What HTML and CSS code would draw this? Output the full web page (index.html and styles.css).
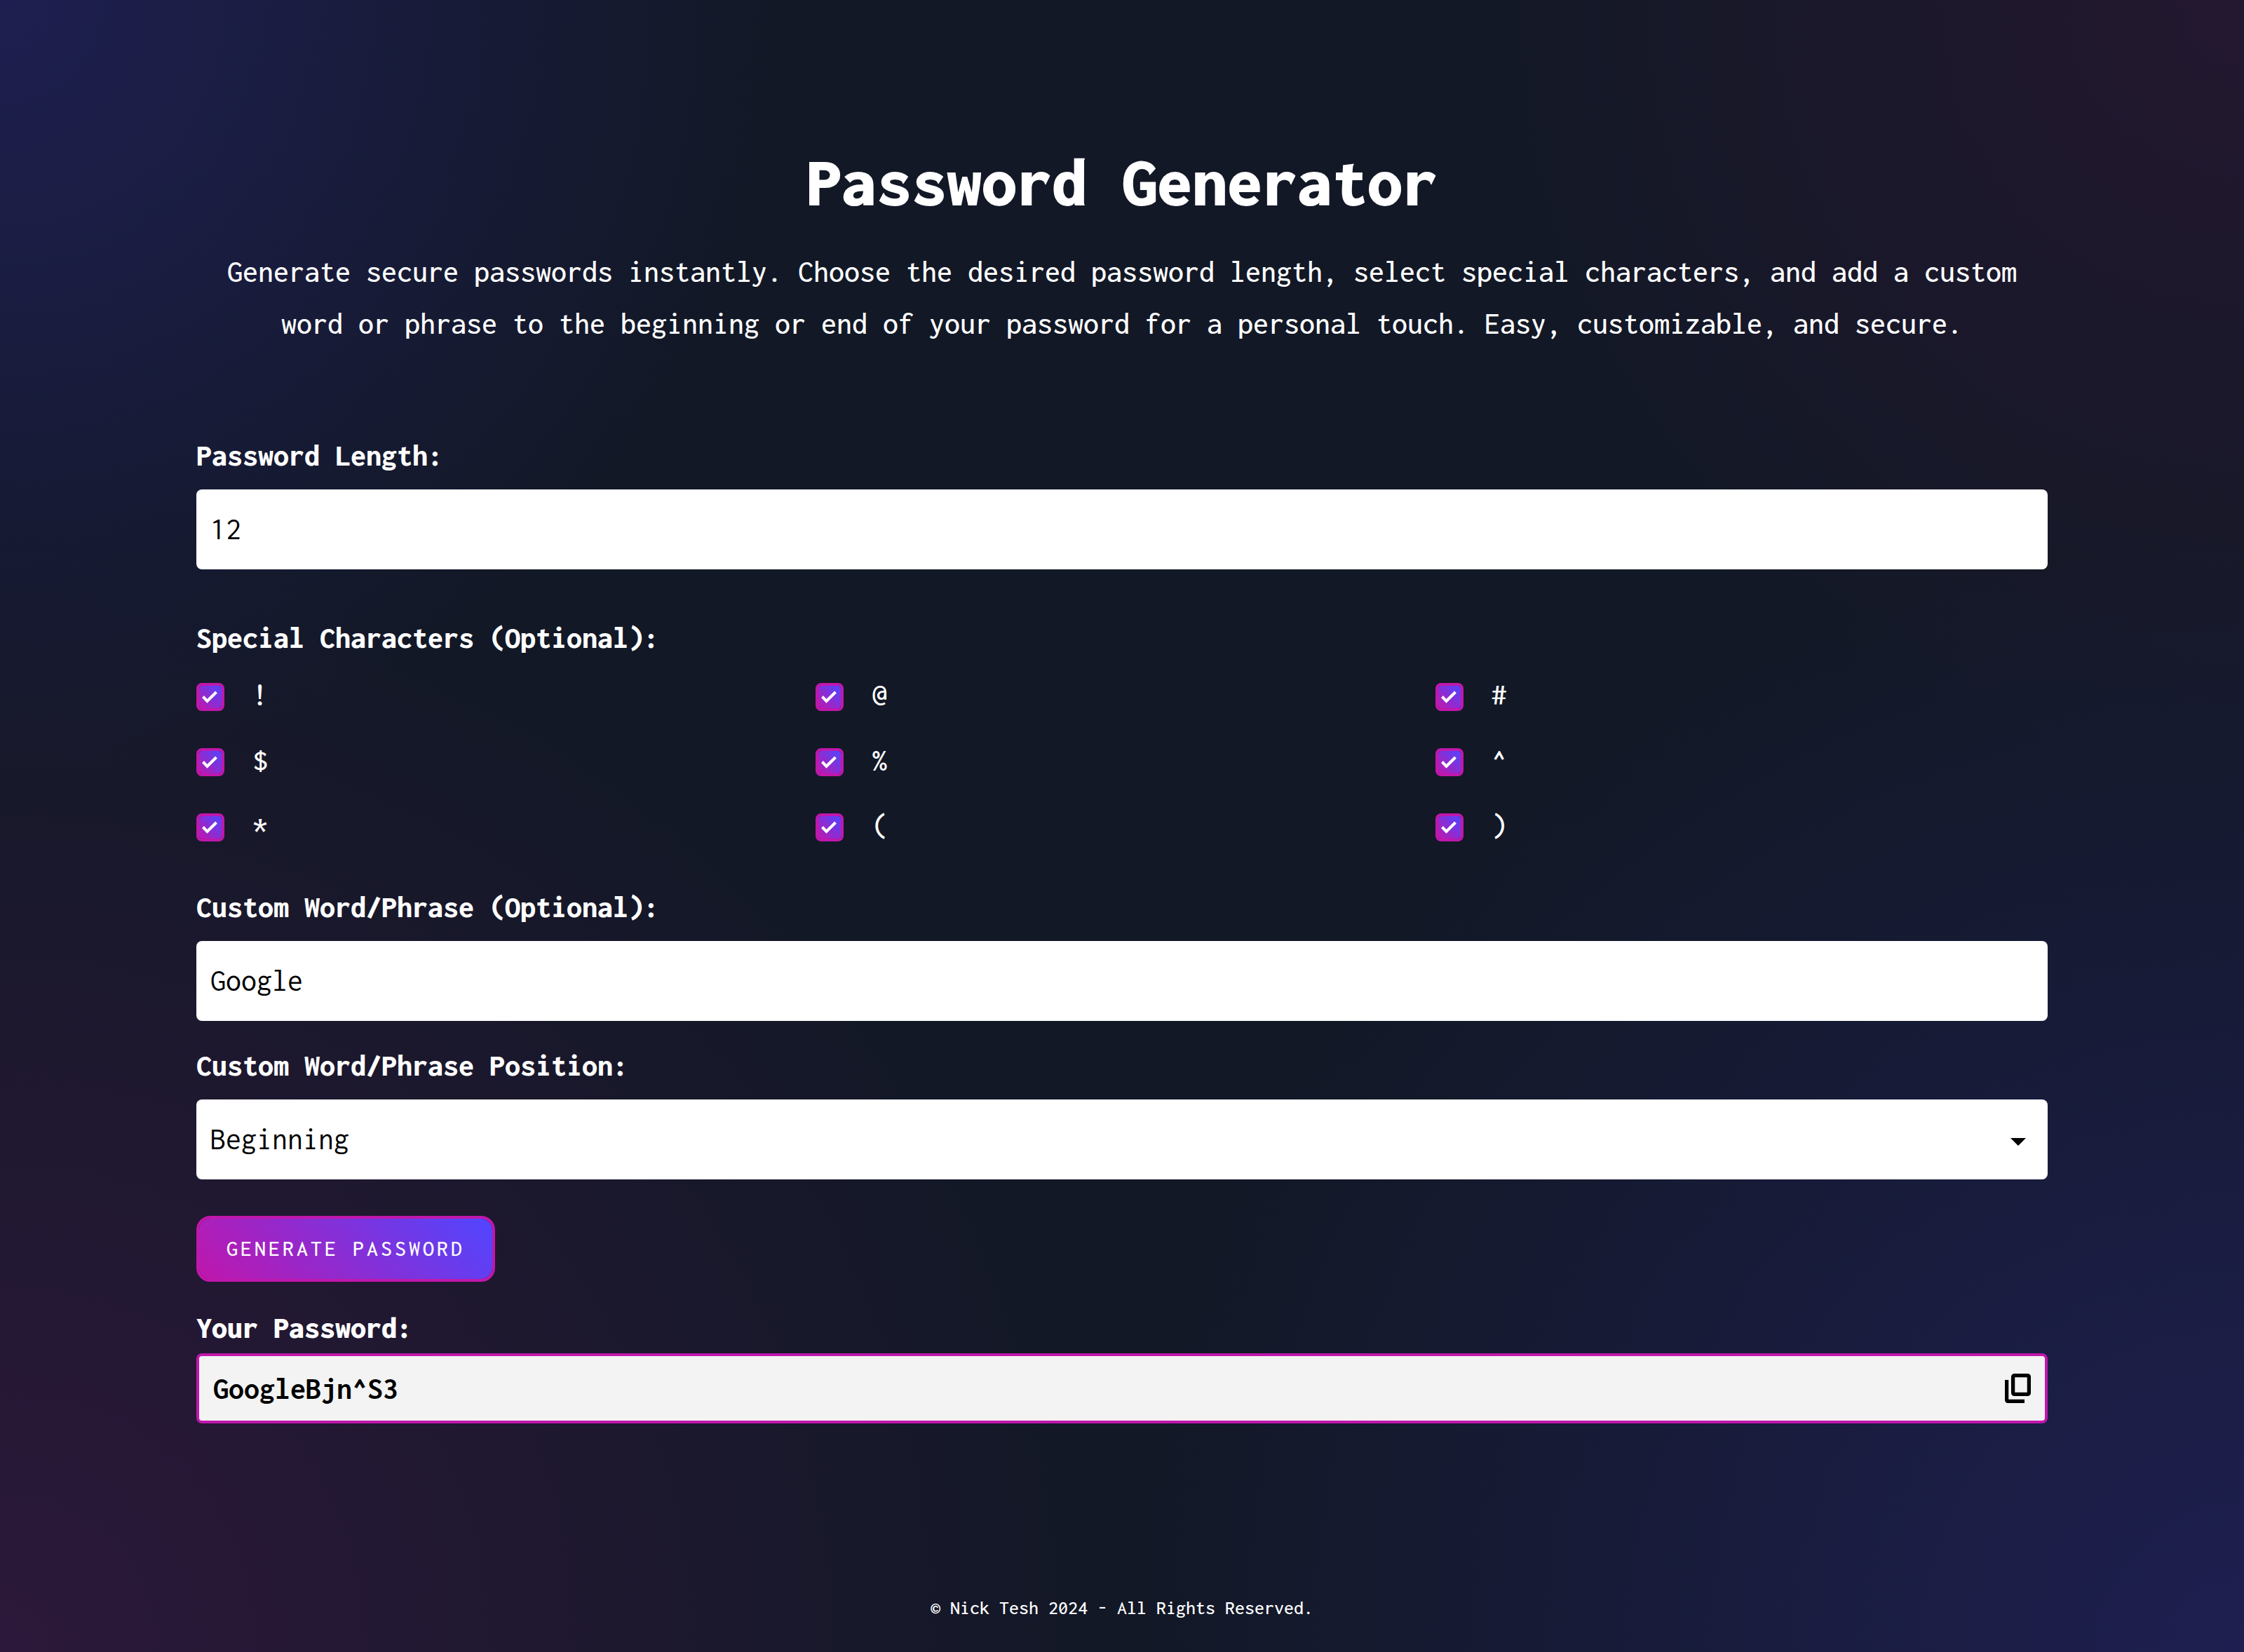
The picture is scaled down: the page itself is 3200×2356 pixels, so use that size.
FILE: index.html
```html
<!DOCTYPE html>
<html lang="en">
<head>
<meta charset="utf-8">
<meta name="viewport" content="width=device-width, initial-scale=1">
<title>Password Generator</title>
<link rel="stylesheet" href="styles.css">
</head>
<body>
<main class="container">
  <header class="intro">
    <h1>Password Generator</h1>
    <p>Generate secure passwords instantly. Choose the desired password length, select special characters, and add a custom word or phrase to the beginning or end of your password for a personal touch. Easy, customizable, and secure.</p>
  </header>
  <form class="form">
    <div class="field field-length">
      <label class="title" for="length">Password Length:</label>
      <input class="control" id="length" type="text" inputmode="numeric" value="12">
    </div>
    <fieldset class="chars">
      <legend class="title">Special Characters (Optional):</legend>
      <div class="grid">
        <label class="option"><input class="check" type="checkbox" checked>!</label>
        <label class="option"><input class="check" type="checkbox" checked>@</label>
        <label class="option"><input class="check" type="checkbox" checked>#</label>
        <label class="option"><input class="check" type="checkbox" checked>$</label>
        <label class="option"><input class="check" type="checkbox" checked>%</label>
        <label class="option"><input class="check" type="checkbox" checked>^</label>
        <label class="option"><input class="check" type="checkbox" checked>*</label>
        <label class="option"><input class="check" type="checkbox" checked>(</label>
        <label class="option"><input class="check" type="checkbox" checked>)</label>
      </div>
    </fieldset>
    <div class="field">
      <label class="title" for="word">Custom Word/Phrase (Optional):</label>
      <input class="control" id="word" type="text" value="Google">
    </div>
    <div class="field">
      <label class="title" for="position">Custom Word/Phrase Position:</label>
      <select class="control" id="position">
        <option selected>Beginning</option>
        <option>End</option>
      </select>
    </div>
    <button class="generate" type="button">GENERATE PASSWORD</button>
  </form>
  <section class="result">
    <h2>Your Password:</h2>
    <div class="output">
      <span>GoogleBjn^S3</span>
      <button class="copy" type="button" aria-label="Copy password">
        <svg viewBox="0 0 37 42" fill="none" stroke="#000" stroke-width="5.3" aria-hidden="true"><rect x="11.6" y="2.6" width="22.8" height="26.8" rx="2"/><path d="M2.6 9v28.4a2 2 0 0 0 2 2H28"/></svg>
      </button>
    </div>
  </section>
</main>
<footer class="footer">© Nick Tesh 2024 - All Rights Reserved.</footer>
</body>
</html>
```
FILE: styles.css
```css
* { box-sizing: border-box; }

:root {
  --pink: #c017ac;
  --violet: #5046ff;
  --fade: linear-gradient(45deg, var(--pink), var(--violet));
}

body {
  margin: 0;
  min-height: 100vh;
  display: flex;
  flex-direction: column;
  color: #fff;
  font: 500 44px/56px Inconsolata, "Liberation Mono", monospace;
  background:
    radial-gradient(circle at 0 0, rgba(80, 60, 250, .2), transparent 28%),
    radial-gradient(circle at 100% 0, rgba(192, 23, 130, .1), transparent 28%),
    radial-gradient(circle at 0 100%, rgba(192, 23, 172, .15), transparent 40%),
    radial-gradient(circle at 100% 100%, rgba(80, 60, 250, .2), transparent 40%),
    #121826;
}

.container {
  width: calc(100% - 80px);
  max-width: 2640px;
  margin: 0 auto;
  padding-top: 200px;
}

.intro { text-align: center; }

h1 {
  margin: 0;
  font-size: 100px;
  font-weight: 900;
  line-height: 120px;
}

.intro p {
  margin: 30px 0 0;
  line-height: 74px;
}

.form { margin-top: 124px; }

.title {
  display: block;
  padding: 0;
  font-weight: 800;
  line-height: 54px;
}

.field { margin-top: 36px; }
.field-length { margin-bottom: 70px; }

.control {
  display: block;
  width: 100%;
  height: 114px;
  margin-top: 22px;
  padding: 0 20px 2px;
  border: 0;
  border-radius: 8px;
  background: #fff;
  color: #000;
  font: inherit;
  font-weight: 400;
}

select.control {
  appearance: none;
  background: #fff url("data:image/svg+xml,%3Csvg xmlns='http://www.w3.org/2000/svg' viewBox='0 0 22 11'%3E%3Cpath d='M0 0h22L11 11z'/%3E%3C/svg%3E") no-repeat right 31px top 55px / 22px 11px;
}

.chars {
  margin: 0 0 64px;
  padding: 0;
  border: 0;
}

.grid {
  display: grid;
  grid-template-columns: repeat(3, 1fr);
  gap: 43px 10px;
  padding-top: 30px;
}

.option {
  display: flex;
  align-items: flex-start;
  gap: 40px;
  line-height: 50px;
}

.check {
  appearance: none;
  width: 40px;
  height: 40px;
  margin: 8px 0 0;
  border: 4px solid var(--pink);
  border-radius: 8px;
  background:
    url("data:image/svg+xml,%3Csvg xmlns='http://www.w3.org/2000/svg' viewBox='0 0 32 32'%3E%3Cpath d='M5.5 15.5l6 6.3 13-12.8' fill='none' stroke='%23fff' stroke-width='4'/%3E%3C/svg%3E") center / 32px 32px no-repeat,
    var(--fade) padding-box;
}

.generate {
  height: 94px;
  margin-top: 52px;
  padding: 0 39px;
  border: 4px solid var(--pink);
  border-radius: 20px;
  background: var(--fade) padding-box;
  color: #fff;
  font: inherit;
  font-size: 32px;
  letter-spacing: 4px;
}

.result { margin-top: 38px; }

h2 {
  margin: 0;
  font-size: 44px;
  font-weight: 900;
  line-height: 54px;
}

.output {
  display: flex;
  align-items: center;
  justify-content: space-between;
  height: 100px;
  margin-top: 10px;
  padding: 0 20px;
  border: 4px solid var(--pink);
  border-radius: 8px;
  background: #f3f3f3;
  color: #000;
  font-weight: 700;
}

.copy {
  display: flex;
  padding: 0;
  border: 0;
  background: none;
}

.copy svg {
  width: 37px;
  height: 42px;
}

.footer {
  margin-top: auto;
  padding-bottom: 41px;
  text-align: center;
  font-size: 28px;
  line-height: 44px;
}
```
